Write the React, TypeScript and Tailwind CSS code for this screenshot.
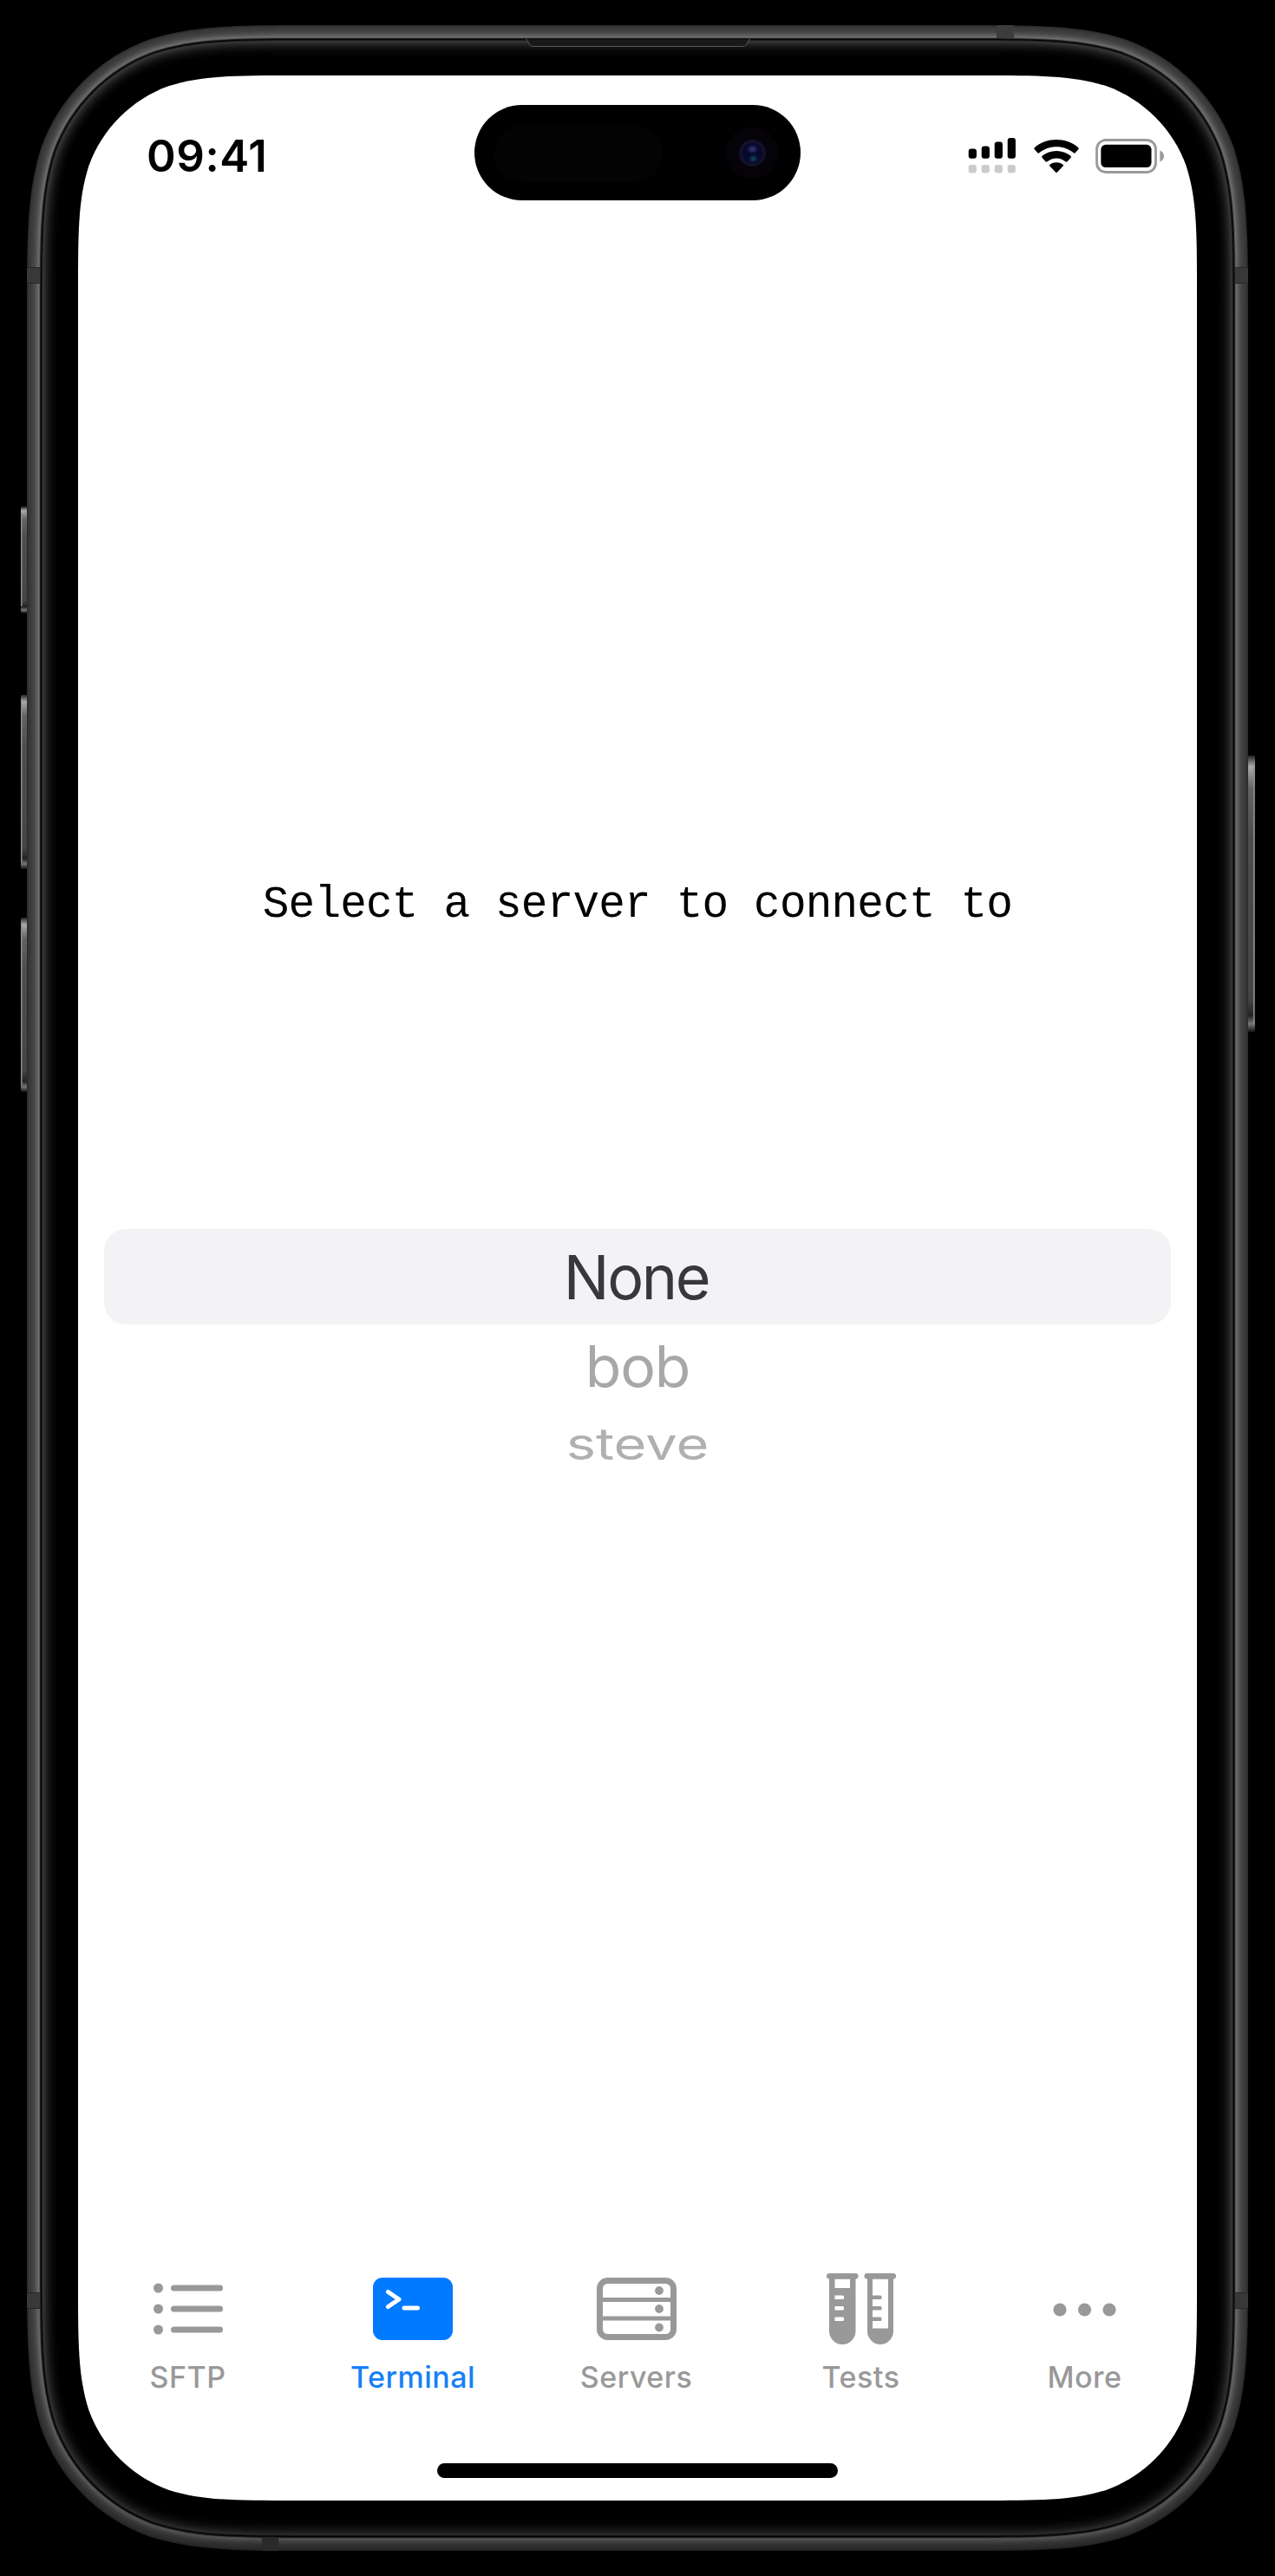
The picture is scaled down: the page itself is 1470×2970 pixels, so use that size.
import React from "react";

/* Rounded rectangle with continuous-curvature corners. */
function squircle(x: number, y: number, w: number, h: number, r: number) {
  const a = 1.52866 * r, b = 1.08849 * r, c = 0.86841 * r, d = 0.63149 * r, e = 0.07491 * r, f = 0.37282 * r, g = 0.16906 * r;
  const R = x + w, B = y + h;
  return [
    `M${x + a} ${y}`, `L${R - a} ${y}`,
    `C${R - b} ${y} ${R - c} ${y} ${R - d} ${y + e}`,
    `C${R - f} ${y + g} ${R - g} ${y + f} ${R - e} ${y + d}`,
    `C${R} ${y + c} ${R} ${y + b} ${R} ${y + a}`,
    `L${R} ${B - a}`,
    `C${R} ${B - b} ${R} ${B - c} ${R - e} ${B - d}`,
    `C${R - g} ${B - f} ${R - f} ${B - g} ${R - d} ${B - e}`,
    `C${R - c} ${B} ${R - b} ${B} ${R - a} ${B}`,
    `L${x + a} ${B}`,
    `C${x + b} ${B} ${x + c} ${B} ${x + d} ${B - e}`,
    `C${x + f} ${B - g} ${x + g} ${B - f} ${x + e} ${B - d}`,
    `C${x} ${B - c} ${x} ${B - b} ${x} ${B - a}`,
    `L${x} ${y + a}`,
    `C${x} ${y + b} ${x} ${y + c} ${x + e} ${y + d}`,
    `C${x + g} ${y + f} ${x + f} ${y + g} ${x + d} ${y + e}`,
    `C${x + c} ${y} ${x + b} ${y} ${x + a} ${y}Z`,
  ].join(" ");
}

/* Grey level of each one-pixel ring of the metal band, outside to inside. */
const band = [44, 50, 56, 58, 60, 62, 65, 68, 72, 78, 85, 91, 98, 110, 90, 30, 4, 26, 54, 50, 44, 38, 33, 28, 24, 20, 17, 14, 11, 9, 7, 5, 4, 3, 2, 1, 0];

const hole = squircle(90, 87, 1290, 2796, 165);

/* Left-hand keys: top edge and height. */
const keys = [[584, 123], [801, 201], [1058, 201]];

function Bezel() {
  return (
    <svg className="pointer-events-none absolute inset-0" width="1470" height="2970" viewBox="0 0 1470 2970">
      <defs>
        <linearGradient id="key" x1="0" x2="0" y1="0" y2="1">
          <stop offset="0" stopColor="#222" />
          <stop offset=".04" stopColor="#aaa" />
          <stop offset=".12" stopColor="#606463" />
          <stop offset=".3" stopColor="#4c4e4e" />
          <stop offset=".88" stopColor="#444646" />
          <stop offset=".94" stopColor="#222" />
          <stop offset=".97" stopColor="#777" />
          <stop offset="1" stopColor="#111" />
        </linearGradient>
        <linearGradient id="shade" x1="0" x2="0" y1="0" y2="1">
          <stop offset="0" stopColor="#000" stopOpacity="0" />
          <stop offset=".9" stopColor="#000" stopOpacity="0" />
          <stop offset="1" stopColor="#000" stopOpacity=".25" />
        </linearGradient>
        <mask id="ring">
          <rect width="1470" height="2970" fill="#fff" />
          <path d={hole} fill="#000" />
        </mask>
      </defs>
      {keys.map(([y, h]) => (
        <g key={y}>
          <rect x="24" y={y} width="9" height={h} rx="2" fill="url(#key)" />
          <rect x="24" y={y + 8} width="1.5" height={h - 16} fill="#8a8c8c" />
        </g>
      ))}
      <rect x="1438" y="871" width="9" height="319" rx="2" fill="url(#key)" />
      <rect x="1445" y="880" width="1.5" height="300" fill="#8a8c8c" />
      <g mask="url(#ring)">
        {band.map((v, i) => (
          <path key={i} d={squircle(31 + i, 29 + i, 1408 - 2 * i, 2912 - 2 * i, 222 - i)} fill={`rgb(${v},${v},${v})`} />
        ))}
        <path d={squircle(31, 29, 1408, 2912, 222)} fill="url(#shade)" />
        {[[31, 308], [1424, 308], [31, 2643], [1424, 2643]].map(([x, y]) => (
          <g key={`${x}-${y}`}>
            <rect x={x} y={y} width="15" height="19" fill="#383838" />
            <rect x={x} y={y} width="15" height="1" fill="#262626" />
            <rect x={x} y={y + 18} width="15" height="1" fill="#262626" />
          </g>
        ))}
        <rect x="1149" y="29" width="20" height="15" fill="#3c3c3c" />
        <rect x="302" y="2926" width="19" height="15" fill="#2a2a2a" />
        <path d="M607 45.5L611 52Q612 53.5 615 53.5H856Q859 53.5 860 52L864 45.5Z" fill="#181818" />
        <path d="M606 45.5H607L611 52Q612 53.5 615 53.5H856Q859 53.5 860 52L864 45.5H865" fill="none" stroke="#555" />
      </g>
    </svg>
  );
}

function Signal() {
  return (
    <svg width="56" height="42" viewBox="0 0 56 42">
      {[[0, 13.5, 12], [15, 10.5, 15], [30, 5.5, 20], [45, 1, 24.5]].map(([x, y, h]) => (
        <g key={x}>
          <rect x={x + 0.7} y={y} width="9.2" height={h - 0.7} rx="3" fill="#000" />
          <rect x={x + 0.7} y="32" width="9.2" height="9.5" rx="3" fill="#cbcbcb" />
        </g>
      ))}
    </svg>
  );
}

function Wifi() {
  return (
    <svg width="52" height="38" viewBox="0 0 52 38">
      <path d="M.8 11.2Q-.3 10 1 8.900C8 3 16.500 0 26 0S44 3 51 8.900Q52.300 10 51.200 11.200L47.900 15Q46.900 16.200 45.600 15.100C40.200 10.800 33.500 8.200 26 8.200S11.800 10.800 6.400 15.100Q5.100 16.200 4.100 15Z" />
      <path d="M9.600 20.900Q8.500 19.700 9.800 18.600C14.300 15.200 19.800 13 26 13S37.700 15.200 42.200 18.600Q43.500 19.700 42.400 20.900L38.800 25Q37.700 26.200 36.400 25.200C33.500 22.900 30 21.500 26 21.500S18.500 22.900 15.600 25.200Q14.300 26.200 13.200 25Z" />
      <path d="M18.400 30.600Q17.400 29.500 18.800 28.600C21 27 23.300 26.200 26 26.200S31 27 33.200 28.600Q34.600 29.500 33.600 30.600L27 37.600Q26 38.500 25 37.600Z" />
    </svg>
  );
}

function Battery() {
  return (
    <svg width="80" height="40" viewBox="0 0 80 40">
      <rect x="1.500" y="1.500" width="68" height="37" rx="10.500" fill="none" stroke="#9a9a9a" strokeWidth="2.800" />
      <rect x="6.300" y="6.800" width="58.200" height="26.200" rx="5.500" />
      <path d="M74.300 13.500Q79 15.800 79 20T74.300 26.500Z" fill="#999" />
    </svg>
  );
}

const grey = "#999";

function ListIcon() {
  return (
    <svg width="80" height="60" viewBox="0 0 80 60" fill={grey}>
      {[6, 30, 54].map((y) => (
        <g key={y}>
          <circle cx="5.500" cy={y} r="5.500" />
          <rect x="20" y={y - 3.5} width="60" height="7" rx="3.500" />
        </g>
      ))}
    </svg>
  );
}

function TerminalIcon() {
  return (
    <svg width="92" height="72" viewBox="0 0 92 72">
      <rect width="92" height="72" rx="11" fill="#007aff" />
      <path d="M17.500 16.500L30 25L17.500 33.500" fill="none" stroke="#fff" strokeWidth="5" strokeLinecap="round" strokeLinejoin="round" />
      <path d="M36 35H51.500" stroke="#fff" strokeWidth="5" strokeLinecap="round" />
    </svg>
  );
}

function ServersIcon() {
  return (
    <svg width="92" height="72" viewBox="0 0 92 72" fill={grey}>
      <rect x="3.500" y="3.500" width="85" height="65" rx="9" fill="none" stroke={grey} strokeWidth="7" />
      <rect x="4" y="23" width="84" height="5" />
      <rect x="4" y="44.500" width="84" height="5" />
      <circle cx="72" cy="15" r="4.900" />
      <circle cx="72" cy="36" r="4.900" />
      <circle cx="72" cy="57.500" r="4.900" />
    </svg>
  );
}

function TestsIcon() {
  return (
    <svg width="80" height="82" viewBox="0 0 80 82" fill={grey}>
      <rect x="0" y="0" width="36.500" height="6.500" rx="3.200" />
      <rect x="43.500" y="0" width="36.500" height="6.500" rx="3.200" />
      <path fillRule="evenodd" d="M3 4H33.500V66.500A15.250 15.500 0 0 1 3 66.500ZM9.500 6.500V17H27V6.500ZM9.500 25.500V30H18.500Q20 30 20 28.500V27Q20 25.500 18.500 25.500ZM9.500 38V42.500H18.500Q20 42.500 20 41V39.500Q20 38 18.500 38ZM9.500 50.500V55H18.500Q20 55 20 53.500V52Q20 50.500 18.500 50.500Z" />
      <path fillRule="evenodd" d="M47 4H77V66.500A15 15.500 0 0 1 47 66.500ZM53 6.500V63.500H71V6.500Z" />
      <rect x="50" y="25.500" width="13.500" height="4.500" rx="1.500" />
      <rect x="50" y="38" width="13.500" height="4.500" rx="1.500" />
      <rect x="50" y="50.500" width="13.500" height="4.500" rx="1.500" />
    </svg>
  );
}

function MoreIcon() {
  return (
    <svg width="74" height="17" viewBox="0 0 74 17" fill={grey}>
      <circle cx="8" cy="9" r="7.600" />
      <circle cx="36.500" cy="9" r="7.600" />
      <circle cx="65" cy="9" r="7.600" />
    </svg>
  );
}

const tabs = [
  { label: "SFTP", icon: <ListIcon />, active: false, w: "w-[253px]" },
  { label: "Terminal", icon: <TerminalIcon />, active: true, w: "w-[266px]" },
  { label: "Servers", icon: <ServersIcon />, active: false, w: "w-[249px]" },
  { label: "Tests", icon: <TestsIcon />, active: false, w: "w-[269px]" },
  { label: "More", icon: <MoreIcon />, active: false, w: "w-[247px]" },
];

export default function App() {
  return (
    <div className="relative h-[2970px] w-[1470px] overflow-hidden bg-black px-[90px] pt-[87px] font-['Inter',sans-serif]">
      <main className="flex h-[2796px] flex-col rounded-[150px] bg-white">
        <header className="flex h-[180px] items-start pl-[79px] pt-[34px]">
          <div className="mt-[32px] w-[378px] text-[51px] leading-[54px] font-semibold tracking-[0.6px] text-black">09:41</div>
          <div className="relative h-[110px] w-[376px] rounded-full bg-black">
            <div className="absolute top-[23px] left-[23px] h-[66px] w-[194px] rounded-full bg-[#030303]" />
            <div className="absolute top-[25px] right-[26px] flex size-[60px] items-center justify-center rounded-full bg-[#050307]">
              <div className="relative size-[31px] rounded-full border-4 border-[#11112b] bg-[#08082c]">
                <div className="absolute top-[4px] left-[7px] h-[6px] w-[9px] rounded-full bg-[#35306f] blur-[1.5px]" />
                <div className="absolute top-[15px] left-[9px] h-[6px] w-[7px] rounded-full bg-[#11455a] blur-[1.5px]" />
              </div>
            </div>
          </div>
          <div className="ml-[193px] flex">
            <div className="mt-[37px]"><Signal /></div>
            <div className="mt-[40px] ml-[20px]"><Wifi /></div>
            <div className="mt-[39px] ml-[19px]"><Battery /></div>
          </div>
        </header>
        <h1 className="mt-[742px] h-[70px] text-center font-['Liberation_Mono',monospace] text-[51px] leading-[70px] tracking-[-0.8px] whitespace-pre text-black">Select a server to connect to</h1>
        <section className="mx-[30px] mt-[338px] text-center text-[70px]">
          <div className="h-[110px] rounded-[25px] bg-[#f3f3f5] pr-[3px] leading-[111px] tracking-[-2.4px] text-[#38383a]">None</div>
          <div className="h-[96px] origin-center scale-y-[0.97] text-[68px] leading-[96px] tracking-[-1.2px] text-[#a8a8a8]">bob</div>
          <div className="h-[84px] origin-center scale-y-[0.78] text-[65px] leading-[84px] text-[#b0b0b0]">steve</div>
        </section>
        <nav className="mt-auto mb-[72px] flex h-[156px]">
          {tabs.map((t) => (
            <div key={t.label} className={`${t.w} flex shrink-0 flex-col items-center`}>
              <div className="flex h-[100px] items-center justify-center">{t.icon}</div>
              <div className={t.active ? "mt-[7px] text-[34px] leading-[44px] font-medium tracking-[0.5px] text-[#1681f5]" : "mt-[7px] text-[34px] leading-[44px] font-medium tracking-[0.5px] text-[#999]"}>{t.label}</div>
            </div>
          ))}
        </nav>
        <div className="mx-auto mb-[26px] h-[17px] w-[462px] rounded-full bg-black" />
      </main>
      <Bezel />
    </div>
  );
}
